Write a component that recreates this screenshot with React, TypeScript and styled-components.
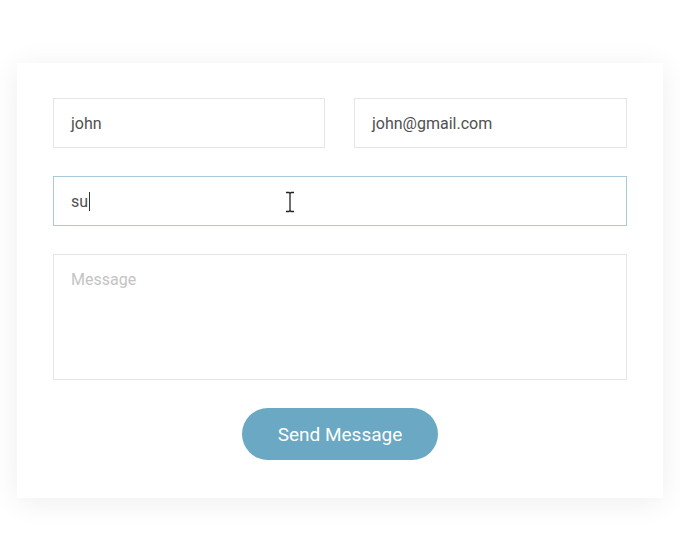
import React from "react";
import styled, { createGlobalStyle } from "styled-components";

const Global = createGlobalStyle`
  html, body { margin: 0; padding: 0; background: #ffffff; }
  body { font-family: Roboto, "Liberation Sans", Arial, sans-serif; }
  * { box-sizing: border-box; }
`;

const Page = styled.div`
  padding: 63px 17px 55px;
`;

const Card = styled.form`
  background: #ffffff;
  box-shadow: 0 4px 28px rgba(0, 0, 0, 0.07);
  padding: 35px 36px 38px 36px;
  display: flex;
  flex-direction: column;
  gap: 28px;
`;

const Row = styled.div`
  display: grid;
  grid-template-columns: 272px 273px;
  justify-content: space-between;
`;

const Field = styled.div<{ $focused?: boolean; $tall?: boolean }>`
  position: relative;
  height: ${(p) => (p.$tall ? "126px" : "50px")};
  border: 1px solid ${(p) => (p.$focused ? "#a9cbd9" : "#e5e5e5")};
  padding: ${(p) => (p.$tall ? "15px 17px" : "0 17px")};
  display: flex;
  align-items: ${(p) => (p.$tall ? "flex-start" : "center")};
  font-size: 16px;
  color: #505050;
  background: #ffffff;
`;

const Placeholder = styled.span`
  color: #c4c4c4;
`;

const Caret = styled.span`
  display: inline-block;
  width: 1px;
  height: 19px;
  background: #333333;
  margin-left: 1px;
  vertical-align: middle;
`;

const Pointer = styled.svg`
  position: absolute;
  left: 231px;
  top: 14px;
`;

const Actions = styled.div`
  display: flex;
  justify-content: center;
`;

const SendButton = styled.button`
  width: 196px;
  height: 52px;
  border: none;
  border-radius: 26px;
  background: #6aa8c3;
  color: #ffffff;
  font-family: Roboto, "Liberation Sans", Arial, sans-serif;
  font-size: 19px;
  cursor: pointer;
  padding: 0;
`;

export default function App() {
  return (
    <>
      <Global />
      <Page>
        <Card onSubmit={(e) => e.preventDefault()}>
          <Row>
            <Field>john</Field>
            <Field>john@gmail.com</Field>
          </Row>
          <Field $focused>
            <span>su</span>
            <Caret />
            <Pointer width="10" height="22" viewBox="0 0 10 22">
              <path
                d="M1 1.5h3l1 1 1-1h3M5 2.5v17M1 20.5h3l1-1 1 1h3"
                fill="none"
                stroke="#222"
                strokeWidth="1.3"
              />
            </Pointer>
          </Field>
          <Field $tall>
            <Placeholder>Message</Placeholder>
          </Field>
          <Actions>
            <SendButton type="submit">Send Message</SendButton>
          </Actions>
        </Card>
      </Page>
    </>
  );
}
